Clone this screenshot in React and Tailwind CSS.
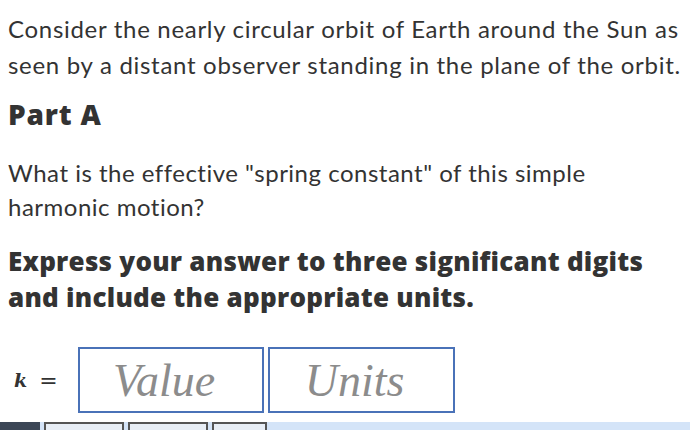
export default function App() {
  return (
    <div className="relative w-[700px] h-[430px] overflow-hidden bg-white text-[#333] font-['Lato',sans-serif]">
      <div className="pl-[8px] pt-[11px]">
        <p className="text-[24px] leading-[36px] tracking-[0.7px]">
          Consider the nearly circular orbit of Earth around the Sun as
          <br />
          seen by a distant observer standing in the plane of the orbit.
        </p>
        <h2 className="mt-[13px] text-[28px] leading-[36px] font-extrabold font-['Open_Sans',sans-serif] tracking-[0.8px]">Part A</h2>
        <p className="mt-[24px] text-[24px] leading-[34px] tracking-[0.5px]">
          What is the effective "spring constant" of this simple
          <br />
          harmonic motion?
        </p>
        <p className="mt-[19px] text-[26px] leading-[36px] font-extrabold font-['Open_Sans',sans-serif] tracking-[0.25px]">
          Express your answer to three significant digits
          <br />
          and include the appropriate units.
        </p>
        <div className="mt-[32px] flex items-center">
          <div className="w-[70px] pl-[6px] text-[19px] font-['DejaVu_Serif',serif] flex items-center">
            <i className="font-bold">k</i>
            <span className="ml-[12px] text-[22px]">=</span>
          </div>
          <div className="flex gap-[4px]">
            <div className="w-[186px] h-[66px] border-2 border-[#4a72b8] flex items-center justify-center pr-[14px] font-['Liberation_Serif',serif] italic text-[46px] text-[#8c8c8c]">
              Value
            </div>
            <div className="w-[187px] h-[66px] border-2 border-[#4a72b8] flex items-center justify-center pr-[14px] font-['Liberation_Serif',serif] italic text-[46px] text-[#8c8c8c]">
              Units
            </div>
          </div>
        </div>
      </div>
      <div className="absolute left-0 bottom-0 w-[690px] h-[8px] bg-[#d4e4f8] flex gap-[4px]">
        <div className="w-[40px] h-full bg-[#3c4656]" />
        <div className="w-[80px] h-full border-2 border-b-0 border-[#555] bg-[#e8eef6]" />
        <div className="w-[80px] h-full border-2 border-b-0 border-[#555] bg-[#e8eef6]" />
        <div className="w-[55px] h-full border-2 border-b-0 border-[#555] bg-[#e8eef6]" />
      </div>
    </div>
  );
}
